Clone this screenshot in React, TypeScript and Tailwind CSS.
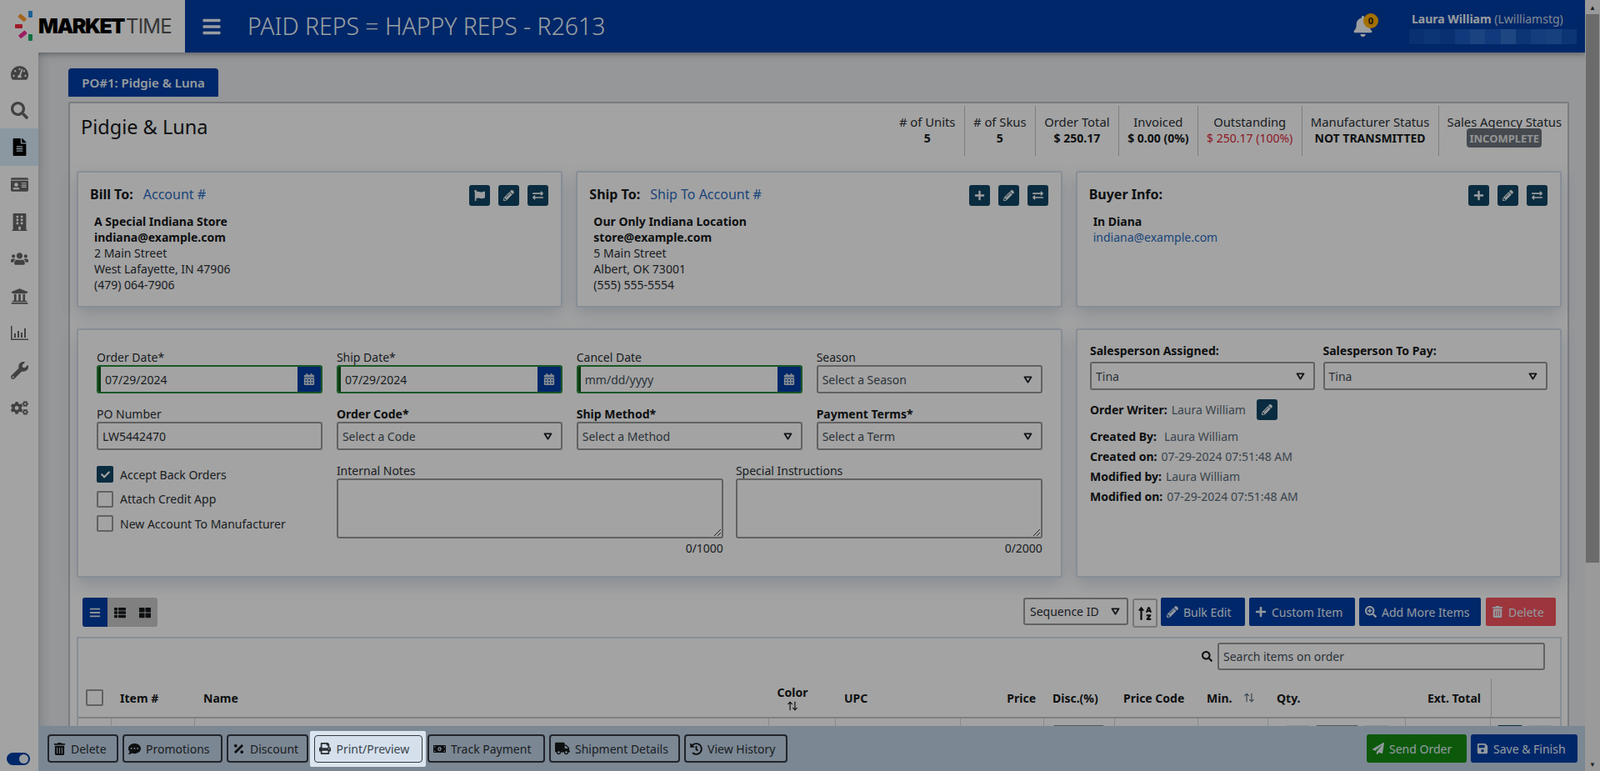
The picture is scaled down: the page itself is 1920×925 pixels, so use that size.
import type { ReactNode } from "react";
import {
  FaBars,
  FaBell,
  FaBuilding,
  FaCalendarAlt,
  FaCheck,
  FaCogs,
  FaCommentDots,
  FaExchangeAlt,
  FaFileAlt,
  FaFlag,
  FaHistory,
  FaIdCard,
  FaMoneyBillAlt,
  FaPaperPlane,
  FaPencilAlt,
  FaPercentage,
  FaPlus,
  FaPrint,
  FaSave,
  FaSearch,
  FaSearchPlus,
  FaSortAlphaUp,
  FaTachometerAlt,
  FaThLarge,
  FaThList,
  FaTrashAlt,
  FaTruck,
  FaUniversity,
  FaUsers,
  FaWrench,
} from "react-icons/fa";
import { LuArrowUpDown } from "react-icons/lu";

function ChartIcon() {
  return (
    <svg width="21" height="18" viewBox="0 0 21 18" fill="currentColor">
      <path d="M0 0h1.6v15.4H21V17H0z" />
      <rect x="4" y="9" width="2" height="5" />
      <rect x="8" y="6" width="2" height="8" />
      <rect x="12" y="8" width="2" height="6" />
      <rect x="16" y="3" width="2" height="11" />
    </svg>
  );
}

const navIcons = [
  FaTachometerAlt,
  FaSearch,
  FaFileAlt,
  FaIdCard,
  FaBuilding,
  FaUsers,
  FaUniversity,
  ChartIcon,
  FaWrench,
  FaCogs,
];

const mosaic = [
  "bg-[#0f4bb0]",
  "bg-[#1454b8]",
  "bg-[#0f4bb0]",
  "bg-[#1a5cc0]",
  "bg-[#2a6ac8]",
  "bg-[#1a5cc0]",
  "bg-[#3070cc]",
  "bg-[#1454b8]",
  "bg-[#1e60c2]",
  "bg-[#2566c6]",
  "bg-[#1454b8]",
];

const stats = [
  { label: "# of Units", value: "5" },
  { label: "# of Skus", value: "5" },
  { label: "Order Total", value: "$ 250.17" },
  { label: "Invoiced", value: "$ 0.00 (0%)" },
  { label: "Outstanding", value: "$ 250.17 (100%)", red: true },
  { label: "Manufacturer Status", value: "NOT TRANSMITTED" },
];

const tableCols =
  "grid-cols-[40px_100px_689px_80px_150px_100px_85px_100px_84px_165px_102px_1fr]";

function IconBtn({ children }: { children: ReactNode }) {
  return (
    <span className="flex h-[25px] w-[25px] items-center justify-center rounded-[3px] bg-[#104564] text-[13px] text-[#f2f6f8]">
      {children}
    </span>
  );
}

function CaretDown() {
  return (
    <svg width="11" height="9" viewBox="0 0 12 10" className="shrink-0">
      <path d="M1.5 1.5h9L6 8.5z" fill="none" stroke="#1c2024" strokeWidth="2" strokeLinejoin="round" />
    </svg>
  );
}

function SelectBox({ text, className = "" }: { text: string; className?: string }) {
  return (
    <div
      className={`flex h-[34px] items-center justify-between rounded-[3px] border-2 border-[#999] pl-[5px] pr-[10px] text-[14px] text-[#44505a] ${className}`}
    >
      <span>{text}</span>
      <CaretDown />
    </div>
  );
}

function DateField({ label, value, muted }: { label: string; value: string; muted?: boolean }) {
  return (
    <div>
      <div className="h-[19px] text-[14px] leading-[19px] text-[#2b3035]">{label}</div>
      <div className="flex h-[34px] overflow-hidden rounded-[3px] border-2 border-[#2a8a3c]">
        <div
          className={`flex flex-1 items-center border-l-[3px] border-[#0d5a1a] pl-[5px] text-[14px] ${
            muted ? "text-[#44505a]" : "text-[#2b3035]"
          }`}
        >
          {value}
        </div>
        <span className="flex w-[28px] items-center justify-center bg-[#003da5] text-[14px] text-[#d4dde4]">
          <FaCalendarAlt />
        </span>
      </div>
    </div>
  );
}

function SelectField({ label, text, bold }: { label: string; text: string; bold?: boolean }) {
  return (
    <div>
      <div className={`h-[19px] text-[14px] leading-[19px] ${bold ? "font-bold text-[#15181a]" : "text-[#2b3035]"}`}>{label}</div>
      <SelectBox text={text} />
    </div>
  );
}

function Check({ label, checked }: { label: string; checked?: boolean }) {
  return (
    <div className="flex h-[20px] items-center gap-[8px] text-[14px] text-[#2b3035]">
      <span
        className={`flex h-[20px] w-[20px] items-center justify-center rounded-[2px] border-2 text-[11px] text-white ${
          checked ? "border-[#104564] bg-[#104564]" : "border-[#999]"
        }`}
      >
        {checked && <FaCheck />}
      </span>
      {label}
    </div>
  );
}

function NoteBox({ label, count, className }: { label: string; count: string; className: string }) {
  return (
    <div className={className}>
      <div className="h-[19px] text-[14px] leading-[19px] text-[#2b3035]">{label}</div>
      <div className="relative h-[72px] rounded-[3px] border-2 border-[#999]">
        <svg width="10" height="10" viewBox="0 0 10 10" className="absolute bottom-0 right-0">
          <path d="M1 9l8-8M5 9l4-4" stroke="#333" strokeWidth="1" />
        </svg>
      </div>
      <div className="mt-[2px] text-right text-[14px] leading-[19px] text-[#2b3035]">{count}</div>
    </div>
  );
}

function AddressCard({
  title,
  link,
  buttons,
  lines,
}: {
  title: string;
  link?: string;
  buttons: ReactNode;
  lines: ReactNode;
}) {
  return (
    <div className="-mt-[1px] h-[164px] rounded-[3px] border-2 border-[#d3deeb] bg-white pl-[14px] pr-[15px] pt-[15px] shadow-[0_8px_20px_rgba(60,90,130,0.22)]">
      <div className="flex h-[25px] items-center justify-between">
        <div className="pb-[3px] text-[16px]">
          <span className="font-bold text-[#15181a]">{title}</span>
          {link && <span className="ml-[12px] text-[#2c6cc0]">{link}</span>}
        </div>
        <div className="flex gap-[10px]">{buttons}</div>
      </div>
      <div className="pl-[5px] pt-[9px] text-[14px] leading-[19px] text-[#2b3035]">{lines}</div>
    </div>
  );
}

function ToolBtn({ icon, text, className }: { icon: ReactNode; text: string; className: string }) {
  return (
    <span
      className={`flex h-[34px] items-center gap-[6px] rounded-[2px] pl-[7px] text-[14px] text-[#e6f1f9] ${className}`}
    >
      <span className="flex w-[14px] justify-center text-[14px]">{icon}</span>
      {text}
    </span>
  );
}

function FootBtn({ icon, text, className }: { icon: ReactNode; text: string; className: string }) {
  return (
    <span
      className={`flex h-[34px] items-center gap-[6px] rounded-[4px] border-2 border-[#343b44] pl-[5px] text-[14px] text-[#2b3035] ${className}`}
    >
      <span className="flex min-w-[15px] justify-center text-[15px] text-[#15181a]">{icon}</span>
      {text}
    </span>
  );
}

export default function App() {
  return (
    <div className="relative flex h-screen w-full overflow-hidden bg-[#e9ecef] [font-family:'Open_Sans',sans-serif]">
      <div className="flex min-w-0 flex-1 flex-col">
        {/* Top bar */}
        <header className="flex h-[63px] shrink-0 items-center bg-[#003da5] shadow-[0_2px_6px_rgba(0,0,0,0.25)]">
          <div className="flex h-full w-[222px] shrink-0 items-center bg-white">
            <svg width="44" height="63" viewBox="0 0 44 63" className="shrink-0">
              <rect x="34" y="13" width="5" height="8" rx="1" fill="#2e97ef" />
              <rect x="22" y="19" width="10" height="5" rx="1" fill="#ff9b30" transform="rotate(40 27 21)" />
              <rect x="18" y="29" width="9" height="5" rx="1" fill="#fb2a42" />
              <rect x="22" y="39" width="10" height="5" rx="1" fill="#f53098" transform="rotate(-40 27 41)" />
              <rect x="34" y="41" width="5" height="8" rx="1" fill="#18ae64" />
            </svg>
            <span className="ml-[2px] text-[25px] font-black leading-none tracking-[-1.5px] text-black [font-family:Inter,sans-serif]">
              MARKET
            </span>
            <span className="ml-[2px] text-[24px] font-normal leading-none tracking-[-0.8px] text-[#555] [font-family:Inter,sans-serif]">
              TIME
            </span>
          </div>
          <FaBars className="ml-[21px] h-[24px] w-[22px] text-[#eef6fa]" />
          <h1 className="ml-[32px] text-[28.4px] font-light leading-none text-[#f0fbff]">PAID REPS = HAPPY REPS - R2613</h1>
          <div className="relative ml-auto mr-[44px] text-[#f4f7fa]">
            <FaBell className="h-[25px] w-[23px]" />
            <span className="absolute -right-[7px] -top-[3px] flex h-[18px] w-[18px] items-center justify-center rounded-full bg-[#ffb000] text-[11px] font-bold text-[#15181a]">
              0
            </span>
          </div>
          <div className="mr-[10px] w-[201px] pt-[2px]">
            <div className="pl-[3px] text-[14px] leading-[19px] text-[#f0f4f8]">
              <span className="font-bold">Laura William</span>{" "}
              <span className="text-[#c8d6e6]">(Lwilliamstg)</span>
            </div>
            <div className="mt-[3px] flex h-[18px]">
              {mosaic.map((c, i) => (
                <div key={i} className={`flex-1 ${c}`} />
              ))}
            </div>
          </div>
        </header>

        <div className="flex min-h-0 flex-1">
          {/* Sidebar */}
          <aside className="flex w-[46px] shrink-0 flex-col bg-white pt-[2px]">
            {navIcons.map((Icon, i) => (
              <div
                key={i}
                className={`flex h-[44.7px] items-center justify-center text-[21px] ${
                  i === 2 ? "bg-[#d9eefd] text-black" : "text-[#666]"
                }`}
              >
                <Icon />
              </div>
            ))}
            <div className="mb-[7px] ml-[8px] mt-auto flex h-[15px] w-[28px] items-center justify-end rounded-full bg-[#003da5] p-[2px]">
              <span className="h-[11px] w-[11px] rounded-full bg-[#eef4fa]" />
            </div>
          </aside>

          <div className="flex min-w-0 flex-1 flex-col">
            {/* Page */}
            <main className="min-h-0 flex-1 overflow-hidden pl-[36px] pr-[19px] pt-[19px] shadow-[inset_8px_6px_14px_-8px_rgba(60,70,80,0.35)]">
              <div className="flex h-[34px] w-[180px] items-center justify-center rounded-t-[4px] bg-[#003da5] text-[15px] font-semibold text-[#e9f2f8]">
                PO#1: Pidgie &amp; Luna
              </div>
              <div className="mt-[6px] rounded-t-[2px] border-2 border-[#c0c3c8] bg-white pl-[8px] pr-[7px] pt-[3px]">
                <div className="flex h-[60px] items-start justify-between">
                  <div className="pl-[5px] pt-[9px] text-[23.5px] leading-[32px] text-[#15181a]">Pidgie &amp; Luna</div>
                  <div className="flex h-[60px]">
                    {stats.map((s) => (
                      <div key={s.label} className="flex flex-col items-center border-r-[1.5px] border-[#c4c6c9] px-[10.3px] pt-[9px] text-[14.8px] leading-[20px] text-[#2b3035]">
                        <span>{s.label}</span>
                        <span className={s.red ? "text-[14px] font-normal text-[#e02a3a]" : "text-[14px] font-bold text-[#15181a]"}>
                          {s.value}
                        </span>
                      </div>
                    ))}
                    <div className="flex flex-col items-center pl-[10px] pt-[9px] text-[14.8px] leading-[20px] text-[#2b3035]">
                      <span>Sales Agency Status</span>
                      <span className="-mt-[2px] flex h-[23px] w-[90px] items-center justify-center rounded-[4px] bg-[#6c757d] text-[13px] font-bold text-[#e6e6e6]">
                        INCOMPLETE
                      </span>
                    </div>
                  </div>
                </div>

                {/* Address cards */}
                <div className="mt-[19px] grid grid-cols-3 gap-[16px]">
                  <AddressCard
                    title="Bill To:"
                    link="Account #"
                    buttons={
                      <>
                        <IconBtn><FaFlag /></IconBtn>
                        <IconBtn><FaPencilAlt /></IconBtn>
                        <IconBtn><FaExchangeAlt /></IconBtn>
                      </>
                    }
                    lines={
                      <>
                        <div className="font-bold text-[#15181a]">A Special Indiana Store</div>
                        <div className="font-bold text-[#15181a]">indiana@example.com</div>
                        <div>2 Main Street</div>
                        <div>West Lafayette, IN 47906</div>
                        <div>(479) 064-7906</div>
                      </>
                    }
                  />
                  <AddressCard
                    title="Ship To:"
                    link="Ship To Account #"
                    buttons={
                      <>
                        <IconBtn><FaPlus /></IconBtn>
                        <IconBtn><FaPencilAlt /></IconBtn>
                        <IconBtn><FaExchangeAlt /></IconBtn>
                      </>
                    }
                    lines={
                      <>
                        <div className="font-bold text-[#15181a]">Our Only Indiana Location</div>
                        <div className="font-bold text-[#15181a]">store@example.com</div>
                        <div>5 Main Street</div>
                        <div>Albert, OK 73001</div>
                        <div>(555) 555-5554</div>
                      </>
                    }
                  />
                  <AddressCard
                    title="Buyer Info:"
                    buttons={
                      <>
                        <IconBtn><FaPlus /></IconBtn>
                        <IconBtn><FaPencilAlt /></IconBtn>
                        <IconBtn><FaExchangeAlt /></IconBtn>
                      </>
                    }
                    lines={
                      <>
                        <div className="font-bold text-[#15181a]">In Diana</div>
                        <div className="text-[#2c6cc0]">indiana@example.com</div>
                      </>
                    }
                  />
                </div>

                {/* Order form and salesperson */}
                <div className="mt-[25px] grid grid-cols-[1183px_583px] gap-[16px]">
                  <div className="h-[299px] rounded-[3px] border-2 border-[#d3deeb] bg-white px-[22px] pt-[23px] shadow-[0_8px_20px_rgba(60,90,130,0.22)]">
                    <div className="grid grid-cols-4 gap-x-[16.5px] gap-y-[15px]">
                      <DateField label="Order Date*" value="07/29/2024" />
                      <DateField label="Ship Date*" value="07/29/2024" />
                      <DateField label="Cancel Date" value="mm/dd/yyyy" muted />
                      <SelectField label="Season" text="Select a Season" />
                      <div>
                        <div className="h-[19px] text-[14px] leading-[19px] text-[#2b3035]">PO Number</div>
                        <div className="flex h-[34px] items-center rounded-[3px] border-2 border-[#999] pl-[5px] text-[14px] text-[#2b3035]">
                          LW5442470
                        </div>
                      </div>
                      <SelectField label="Order Code*" text="Select a Code" bold />
                      <SelectField label="Ship Method*" text="Select a Method" bold />
                      <SelectField label="Payment Terms*" text="Select a Term" bold />
                    </div>
                    <div className="mt-[15px] grid grid-cols-4 gap-x-[16.5px]">
                      <div className="flex flex-col gap-[9.5px] pt-[4px]">
                        <Check label="Accept Back Orders" checked />
                        <Check label="Attach Credit App" />
                        <Check label="New Account To Manufacturer" />
                      </div>
                      <div className="col-span-3 flex gap-[15px]">
                        <NoteBox label="Internal Notes" count="0/1000" className="w-[464px]" />
                        <NoteBox label="Special Instructions" count="0/2000" className="w-[368px]" />
                      </div>
                    </div>
                  </div>

                  <div className="h-[299px] rounded-[3px] border-2 border-[#d3deeb] bg-white px-[15px] pt-[15px] text-[14px] text-[#15181a] shadow-[0_8px_20px_rgba(60,90,130,0.22)]">
                    <div className="grid grid-cols-2 gap-[10px]">
                      <div>
                        <div className="h-[23px] font-bold leading-[19px]">Salesperson Assigned:</div>
                        <SelectBox text="Tina" />
                      </div>
                      <div>
                        <div className="h-[23px] font-bold leading-[19px]">Salesperson To Pay:</div>
                        <SelectBox text="Tina" />
                      </div>
                    </div>
                    <div className="mt-[11px] flex h-[25px] items-center">
                      <span className="font-bold">Order Writer:</span>
                      <span className="ml-[5px] text-[#5b6b78]">Laura William</span>
                      <span className="ml-[13px]"><IconBtn><FaPencilAlt /></IconBtn></span>
                    </div>
                    <div className="mt-[10px] leading-[19px]">
                      <span className="font-bold">Created By:</span>
                      <span className="ml-[9px] text-[#5b6b78]">Laura William</span>
                    </div>
                    <div className="mt-[5px] leading-[19px]">
                      <span className="font-bold">Created on:</span>
                      <span className="ml-[5px] text-[#5b6b78]">07-29-2024 07:51:48 AM</span>
                    </div>
                    <div className="mt-[5px] leading-[19px]">
                      <span className="font-bold">Modified by:</span>
                      <span className="ml-[5px] text-[#5b6b78]">Laura William</span>
                    </div>
                    <div className="mt-[5px] leading-[19px]">
                      <span className="font-bold">Modified on:</span>
                      <span className="ml-[5px] text-[#5b6b78]">07-29-2024 07:51:48 AM</span>
                    </div>
                  </div>
                </div>

                {/* Item toolbar */}
                <div className="mt-[24px] flex items-start justify-between pl-[7px] pr-[7px]">
                  <div className="flex h-[35px] overflow-hidden rounded-[3px] bg-[#c8c8c8] text-[14px] text-[#15181a]">
                    <span className="flex w-[30px] items-center justify-center bg-[#003da5] text-[#e0e8f0]"><FaBars /></span>
                    <span className="flex w-[30px] items-center justify-center"><FaThList /></span>
                    <span className="flex w-[30px] items-center justify-center"><FaThLarge /></span>
                  </div>
                  <div className="flex items-start">
                    <div className="flex h-[33px] w-[126px] items-center justify-between rounded-[3px] border-2 border-[#999] pl-[6px] pr-[8px] text-[14px] text-[#2b3035]">
                      <span>Sequence ID</span>
                      <CaretDown />
                    </div>
                    <span className="ml-[5px] mt-[1px] flex h-[35px] w-[30px] items-center justify-center rounded-[3px] border-2 border-[#bbb] text-[18px] text-[#15181a]">
                      <FaSortAlphaUp />
                    </span>
                    <ToolBtn className="ml-[4px] w-[101px] bg-[#003da5]" icon={<FaPencilAlt />} text="Bulk Edit" />
                    <ToolBtn className="ml-[5px] w-[127px] bg-[#003da5]" icon={<FaPlus />} text="Custom Item" />
                    <ToolBtn className="ml-[5px] w-[146px] bg-[#003da5]" icon={<FaSearchPlus />} text="Add More Items" />
                    <ToolBtn className="ml-[6px] w-[84px] bg-[#f4535f]" icon={<FaTrashAlt />} text="Delete" />
                  </div>
                </div>

                {/* Items table */}
                <div className="mt-[11px] h-[200px] border-2 border-[#d3deeb] bg-white">
                  <div className="flex items-center justify-end gap-[6px] pr-[18px] pt-[5px]">
                    <FaSearch className="text-[13px] text-[#15181a]" />
                    <div className="flex h-[33px] w-[393px] items-center rounded-[3px] border-2 border-[#999] pl-[5px] text-[14px] text-[#44505a]">
                      Search items on order
                    </div>
                  </div>
                  <div className={`mt-[10px] grid h-[48px] items-center border-b-2 border-[#c8c8c8] text-[14px] font-bold text-[#15181a] ${tableCols}`}>
                    <span className="pl-[9px]">
                      <span className="block h-[20px] w-[21px] rounded-[2px] border-2 border-[#999]" />
                    </span>
                    <span className="pl-[10px]">Item #</span>
                    <span className="pl-[10px]">Name</span>
                    <span className="flex w-[48px] flex-col items-center pl-[8px] leading-[19px]">
                      Color
                      <LuArrowUpDown className="text-[14px]" />
                    </span>
                    <span className="pl-[10px]">UPC</span>
                    <span className="pr-[10px] text-right">Price</span>
                    <span className="pl-[10px]">Disc.(%)</span>
                    <span className="pl-[10px]">Price Code</span>
                    <span className="flex items-center pl-[10px]">
                      Min.
                      <LuArrowUpDown className="ml-[14px] text-[14px] text-[#5b6b78]" />
                    </span>
                    <span className="pl-[10px]">Qty.</span>
                    <span className="pr-[12px] text-right">Ext. Total</span>
                    <span className="h-full border-l border-[#c8c8c8]" />
                  </div>
                  <div className={`grid h-[40px] divide-x divide-[#d8d8d8] ${tableCols}`}>
                    <span />
                    <span />
                    <span />
                    <span />
                    <span />
                    <span />
                    <span className="pl-[11px] pt-[8px]"><span className="block h-[30px] w-[61px] rounded-[2px] bg-[#8a8f94]" /></span>
                    <span />
                    <span />
                    <span className="flex gap-[7px] pl-[21px] pt-[8px]">
                      <span className="h-[30px] w-[29px] rounded-[2px] bg-[#e4e4e4]" />
                      <span className="h-[30px] w-[51px] rounded-[2px] bg-[#8a8f94]" />
                      <span className="h-[30px] w-[29px] rounded-[2px] bg-[#e4e4e4]" />
                    </span>
                    <span />
                    <span className="flex gap-[7px] pl-[8px] pt-[8px]">
                      <span className="h-[30px] w-[30px] rounded-[2px] bg-[#104564]" />
                      <span className="h-[30px] w-[29px] rounded-[2px] bg-[#e4e4e4]" />
                    </span>
                  </div>
                </div>
              </div>
            </main>

            {/* Action bar */}
            <footer className="flex h-[54px] shrink-0 items-center gap-[5px] bg-[#c0d3e6] pl-[11px] pr-[9px]">
              <FootBtn icon={<FaTrashAlt />} text="Delete" className="w-[85px]" />
              <FootBtn icon={<FaCommentDots />} text="Promotions" className="w-[120px]" />
              <FootBtn icon={<FaPercentage />} text="Discount" className="w-[98px]" />
              <div className="relative z-50 -mx-[3px] rounded-[2px] bg-[#dbe5ef] px-[4.5px] py-[5px]">
                <span className="flex h-[33px] w-[130px] items-center gap-[7px] rounded-[4px] border border-[#343b44] bg-[#d5e0ec] pl-[5px] text-[14px] text-[#3c4650]">
                  <FaPrint className="text-[#2b3035]" />
                  Print/Preview
                </span>
              </div>
              <FootBtn icon={<FaMoneyBillAlt />} text="Track Payment" className="w-[141px]" />
              <FootBtn icon={<FaTruck className="text-[18px]" />} text="Shipment Details" className="w-[157px]" />
              <FootBtn icon={<FaHistory />} text="View History" className="w-[124px]" />
              <ToolBtn className="ml-auto w-[120px] rounded-[3px] bg-[#148c14]" icon={<FaPaperPlane />} text="Send Order" />
              <ToolBtn className="w-[128px] rounded-[3px] bg-[#003da5]" icon={<FaSave />} text="Save & Finish" />
            </footer>
          </div>
        </div>
      </div>

      {/* Window scrollbar */}
      <div className="flex w-[18px] shrink-0 flex-col bg-[#f1f1f1] text-[#333]">
        <div className="flex h-[17px] items-center justify-center text-[8px]">▲</div>
        <div className="mx-[1px] h-[658px] bg-[#a8a8a8]" />
        <div className="mt-auto flex h-[17px] items-center justify-center text-[8px]">▼</div>
      </div>

      {/* Tour backdrop */}
      <div className="absolute inset-0 z-40 bg-black/[0.36]" />
    </div>
  );
}
